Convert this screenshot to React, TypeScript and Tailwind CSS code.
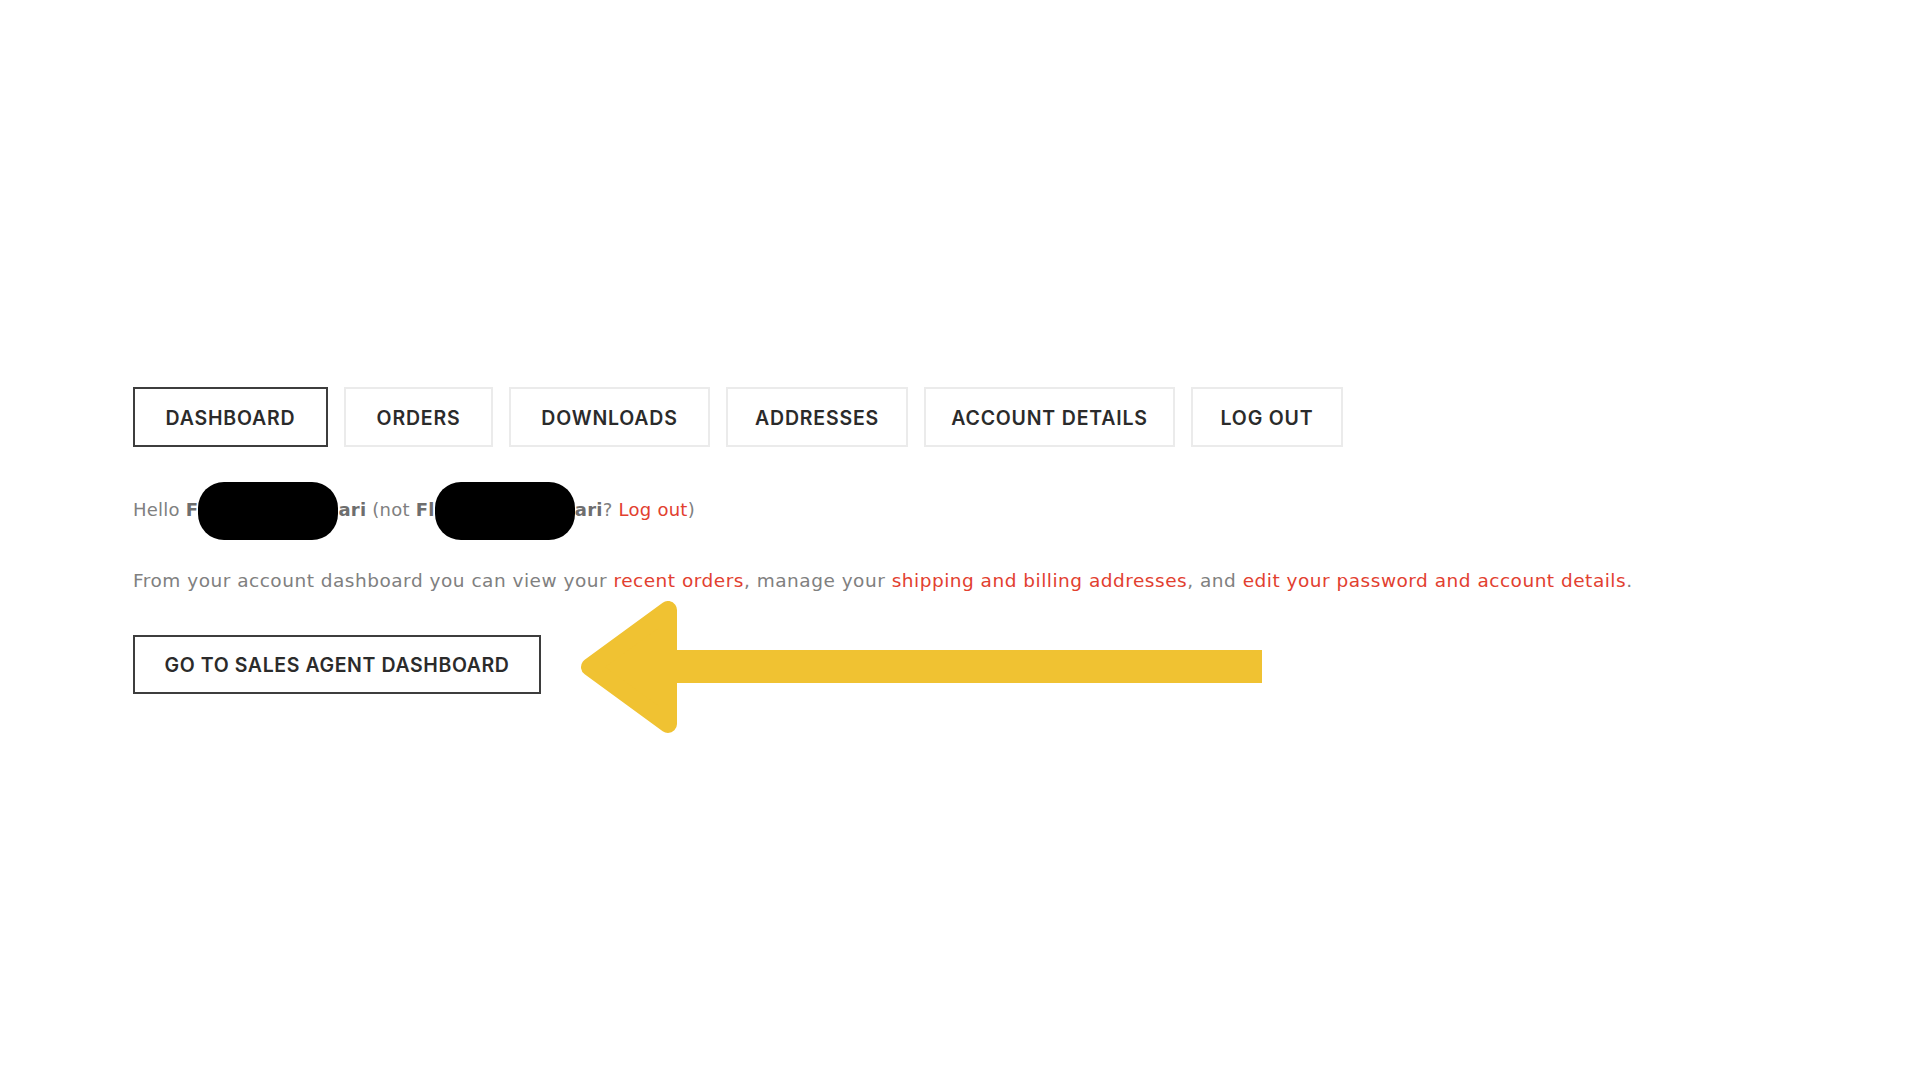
import React from "react";

const tabs = [
  { label: "DASHBOARD", w: "w-[195px]", active: true },
  { label: "ORDERS", w: "w-[149px]" },
  { label: "DOWNLOADS", w: "w-[201px]" },
  { label: "ADDRESSES", w: "w-[182px]" },
  { label: "ACCOUNT DETAILS", w: "w-[251px]" },
  { label: "LOG OUT", w: "w-[152px]" },
];

function Redact() {
  return (
    <span className="inline-block align-middle w-[140px] h-[58px] -my-[20px] rounded-[26px] bg-black" />
  );
}

export default function App() {
  return (
    <div className="min-h-screen w-full bg-white pl-[133px] pt-[387px] font-['Inter','Open_Sans',sans-serif]">
      <nav className="flex gap-4">
        {tabs.map((t) => (
          <a
            key={t.label}
            href="#"
            className={`${t.w} h-[60px] flex items-center justify-center pt-[3px] border-2 ${
              t.active ? "border-[#3d3d3d]" : "border-[#ebebeb]"
            } text-[19.5px] font-semibold tracking-[0.8px] text-[#2b2b2b]`}
          >
            {t.label}
          </a>
        ))}
      </nav>

      <p className="mt-[49px] text-[18px] leading-[28px] tracking-[0.25px] text-[#808080] font-['DejaVu_Sans',sans-serif]">
        Hello <b className="font-bold text-[#6e6e6e]">F</b>
        <Redact />
        <b className="font-bold text-[#6e6e6e]">ari</b> (not{" "}
        <b className="font-bold text-[#6e6e6e]">Fl</b>
        <Redact />
        <b className="font-bold text-[#6e6e6e]">ari</b>?{" "}
        <a href="#" className="text-[#e2402f]">
          Log out
        </a>
        )
      </p>

      <p className="mt-[43px] text-[18.5px] leading-[28px] tracking-[0.5px] text-[#808080] font-['DejaVu_Sans',sans-serif]">
        From your account dashboard you can view your{" "}
        <a href="#" className="text-[#e2402f]">recent orders</a>, manage your{" "}
        <a href="#" className="text-[#e2402f]">shipping and billing addresses</a>, and{" "}
        <a href="#" className="text-[#e2402f]">edit your password and account details</a>.
      </p>

      <div className="relative mt-[40px]">
        <a
          href="#"
          className="inline-flex items-center justify-center w-[408px] h-[59px] pt-[2px] border-2 border-[#3d3d3d] text-[19.5px] font-semibold tracking-[0.6px] text-[#2b2b2b]"
        >
          GO TO SALES AGENT DASHBOARD
        </a>
        <svg
          className="absolute left-[446px] top-[-34px]"
          width="690"
          height="136"
          viewBox="0 0 690 136"
        >
          <rect x="96" y="49" width="587" height="33" fill="#f0c232" />
          <polygon
            points="11,66 89,9 89,123"
            fill="#f0c232"
            stroke="#f0c232"
            strokeWidth="18"
            strokeLinejoin="round"
          />
        </svg>
      </div>
    </div>
  );
}
